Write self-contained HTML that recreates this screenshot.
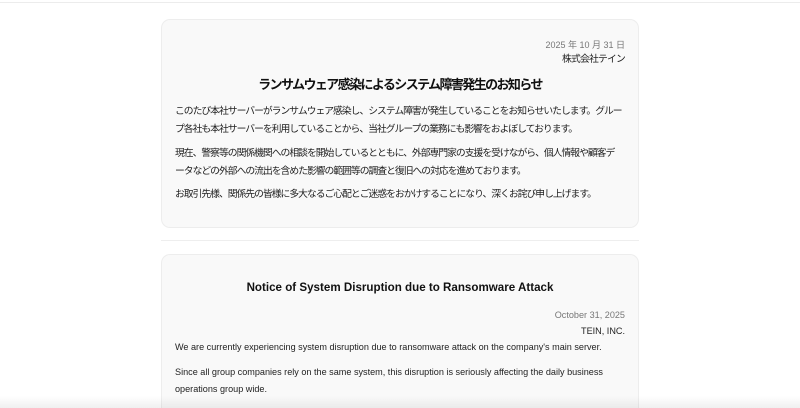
<!DOCTYPE html>
<html><head><meta charset="utf-8"><style>
html,body{margin:0;padding:0;background:#fff;width:800px;height:408px;overflow:hidden;position:relative}
body{font-family:"Liberation Sans","Noto Sans CJK JP",sans-serif;color:#222}
.top{position:absolute;left:0;right:0;top:0;height:2px;border-bottom:1px solid #ececec}
.card{position:absolute;left:161px;width:476px;background:#f9f9f9;border:1px solid #ededed;border-radius:9px}
.t{position:absolute;white-space:nowrap;font-size:9.8px;line-height:12px}
.j{letter-spacing:-1px}
.r{right:13px;text-align:right}
.g{color:#777}
.h{left:0;right:0;text-align:center;font-weight:bold;font-size:13px;line-height:16px;color:#111}
.p{left:13px}
.e{font-size:9.1px}
.div{position:absolute;left:161px;width:478px;top:240px;height:1px;background:#eee}
.shade{position:absolute;left:0;right:0;bottom:0;height:12px;background:linear-gradient(rgba(0,0,0,0),rgba(0,0,0,0.06))}
</style></head><body>
<div class="top"></div>
<div class="card" style="top:19px;height:207px">
 <div class="t r g" style="top:19px;font-size:9px">2025 年 10 月 31 日</div>
 <div class="t r j" style="top:34px;letter-spacing:-0.8px">株式会社テイン</div>
 <div class="t h" style="top:57px;letter-spacing:-1.6px">ランサムウェア感染によるシステム障害発生のお知らせ</div>
 <div class="t p j" style="top:86px">このたび本社サーバーがランサムウェア感染し、システム障害が発生していることをお知らせいたします。グルー</div>
 <div class="t p j" style="top:104px">プ各社も本社サーバーを利用していることから、当社グループの業務にも影響をおよぼしております。</div>
 <div class="t p j" style="top:128px">現在、警察等の関係機関への相談を開始しているとともに、外部専門家の支援を受けながら、個人情報や顧客デ</div>
 <div class="t p j" style="top:146px">ータなどの外部への流出を含めた影響の範囲等の調査と復旧への対応を進めております。</div>
 <div class="t p j" style="top:169px">お取引先様、関係先の皆様に多大なるご心配とご迷惑をおかけすることになり、深くお詫び申し上げます。</div>
</div>
<div class="div"></div>
<div class="card" style="top:254px;height:170px">
 <div class="t h" style="top:25px;font-size:11.6px">Notice of System Disruption due to Ransomware Attack</div>
 <div class="t r g e" style="top:54px">October 31, 2025</div>
 <div class="t r e" style="top:70px">TEIN, INC.</div>
 <div class="t p e" style="top:86px">We are currently experiencing system disruption due to ransomware attack on the company's main server.</div>
 <div class="t p e" style="top:111px">Since all group companies rely on the same system, this disruption is seriously affecting the daily business</div>
 <div class="t p e" style="top:128px">operations group wide.</div>
</div>
<div class="shade"></div>
</body></html>
